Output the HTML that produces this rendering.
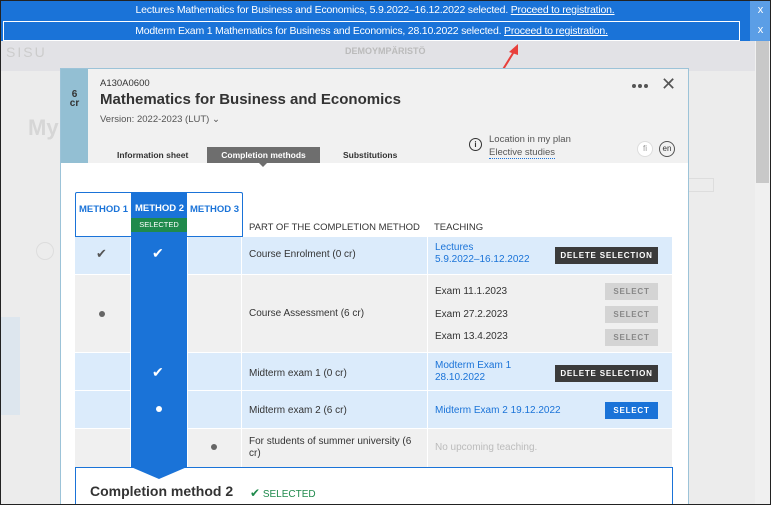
<!DOCTYPE html>
<html><head><meta charset="utf-8"><style>
*{box-sizing:border-box;margin:0;padding:0}
html,body{width:771px;height:505px;overflow:hidden}
body{position:relative;background:#ececec;font-family:"Liberation Sans",sans-serif;font-size:10px;color:#333}
.a{position:absolute}
.ban{left:0;width:750px;height:20px;background:#1a73d8;color:#fff;font-size:10.5px;text-align:center;line-height:20px;letter-spacing:-0.2px;white-space:nowrap}
.ban u{color:#fff}
.x{left:750px;width:21px;height:20px;background:#5b9ee6;color:#fff;text-align:center;line-height:20px;font-size:11px}
.row{left:75px;width:597px}
.btn{position:absolute;width:103px;height:17px;background:#3b3b3b;color:#fff;font-size:8px;font-weight:bold;letter-spacing:0.8px;text-align:center;line-height:17px}
.sel{width:53px;background:#d4d4d4;color:#888}
.blue{color:#1a73d8}
</style></head><body>
<div class="a" style="left:0;top:40px;width:755px;height:31px;background:#e2e2e6"></div>
<div class="a" style="left:6px;top:44px;color:#ccc;font-size:14px;letter-spacing:2px">SISU</div>
<div class="a" style="left:345px;top:46px;color:#bbb;font-size:9px;font-weight:bold">DEMOYMPÄRISTÖ</div>
<div class="a" style="left:28px;top:115px;color:#d6d6d6;font-size:22px;font-weight:bold">My</div>
<div class="a" style="left:36px;top:242px;width:18px;height:18px;border:1px solid #ddd;border-radius:50%"></div>
<div class="a" style="left:0;top:317px;width:20px;height:98px;background:#dde6ee"></div>
<div class="a" style="left:688px;top:178px;width:26px;height:14px;border:1px solid #ddd"></div>
<div class="a" style="left:755px;top:40px;width:15px;height:465px;background:#f0f0f0"></div>
<div class="a" style="left:756px;top:40px;width:13px;height:143px;background:#c8c8c8"></div>
<div class="a ban" style="top:0">Lectures Mathematics for Business and Economics, 5.9.2022–16.12.2022 selected. <u>Proceed to registration.</u></div>
<div class="a x" style="top:0">x</div>
<div class="a ban" style="top:20px;height:21px"></div>
<div class="a ban" style="top:21px;left:3px;width:737px;height:20px;border:1px solid #fff;line-height:18px">Modterm Exam 1 Mathematics for Business and Economics, 28.10.2022 selected. <u>Proceed to registration.</u></div>
<div class="a x" style="top:20px;height:21px">x</div>
<svg class="a" style="left:485px;top:40px" width="40" height="56"><line x1="4" y1="52" x2="30" y2="10" stroke="#e8403c" stroke-width="2"/><polygon points="33,4 24,12 33,15" fill="#e8403c"/></svg>
<div class="a" style="left:60px;top:68px;width:629px;height:437px;background:#fff;border:1px solid #9cc3d8;border-bottom:0"></div>
<div class="a" style="left:61px;top:69px;width:27px;height:94px;background:#93bfd3;text-align:center;font-weight:bold;font-size:10px;line-height:9px;padding-top:21px;color:#333">6<br>cr</div>
<div class="a" style="left:88px;top:69px;width:600px;height:94px;background:#f1f1f1"></div>
<div class="a" style="left:100px;top:78px;font-size:9.5px">A130A0600</div>
<div class="a" style="left:100px;top:91px;font-size:15px;font-weight:bold;color:#333">Mathematics for Business and Economics</div>
<div class="a" style="left:100px;top:114px;font-size:9.5px;color:#555">Version: 2022-2023 (LUT) ⌄</div>
<div class="a" style="left:632px;top:84px;width:4px;height:4px;border-radius:50%;background:#555;box-shadow:6px 0 0 #555,12px 0 0 #555"></div>
<div class="a" style="left:661px;top:74px;font-size:18px;color:#555">✕</div>
<div class="a" style="left:469px;top:138px;width:13px;height:13px;border:1px solid #333;border-radius:50%;font-size:8px;text-align:center;line-height:11px;font-weight:bold">i</div>
<div class="a" style="left:489px;top:133px;font-size:9.5px;color:#555;line-height:13px">Location in my plan<br><span style="border-bottom:1px dotted #1a73d8">Elective studies</span></div>
<div class="a" style="left:637px;top:141px;width:16px;height:16px;border:1px solid #ddd;border-radius:50%;background:#fff;font-size:8px;text-align:center;line-height:14px;color:#999">fi</div>
<div class="a" style="left:659px;top:141px;width:16px;height:16px;border:1px solid #555;border-radius:50%;font-size:8px;text-align:center;line-height:14px">en</div>
<div class="a" style="left:117px;top:150px;font-size:8.5px;font-weight:bold;white-space:nowrap">Information sheet</div>
<div class="a" style="left:207px;top:147px;width:113px;height:16px;background:#6e6e6e;color:#fff;font-size:8.5px;font-weight:bold;text-align:center;line-height:16px;white-space:nowrap">Completion methods</div>
<div class="a" style="left:259px;top:163px;border:4px solid transparent;border-top-color:#6e6e6e"></div>
<div class="a" style="left:343px;top:150px;font-size:8.5px;font-weight:bold">Substitutions</div>
<div class="a" style="left:75px;top:192px;width:168px;height:45px;border:1px solid #1a73d8;border-bottom:0;border-radius:2px 2px 0 0"></div>
<div class="a" style="left:131px;top:192px;width:56px;height:45px;background:#1a73d8"></div>
<div class="a" style="left:131px;top:218px;width:56px;height:14px;background:#1f8a4c;color:#fff;font-size:7.5px;text-align:center;line-height:14px">SELECTED</div>
<div class="a blue" style="left:79px;top:204px;font-size:9.5px;font-weight:bold">METHOD 1</div>
<div class="a" style="left:135px;top:203px;font-size:9.5px;font-weight:bold;color:#fff">METHOD 2</div>
<div class="a blue" style="left:190px;top:204px;font-size:9.5px;font-weight:bold">METHOD 3</div>
<div class="a" style="left:249px;top:222px;font-size:9.5px">PART OF THE COMPLETION METHOD</div>
<div class="a" style="left:434px;top:222px;font-size:9.5px">TEACHING</div>
<div class="a" style="left:75px;top:236px;width:168px;height:1px;background:#1a73d8"></div>
<div class="a row" style="top:237px;height:37px;background:#dbebfb"></div>
<div class="a row" style="top:275px;height:77px;background:#f0f0f0"></div>
<div class="a row" style="top:353px;height:37px;background:#dbebfb"></div>
<div class="a row" style="top:391px;height:37px;background:#dbebfb"></div>
<div class="a row" style="top:429px;height:38px;background:#f0f0f0"></div>
<div class="a" style="left:130px;top:237px;width:1px;height:230px;background:#fff"></div>
<div class="a" style="left:187px;top:237px;width:1px;height:230px;background:#fff"></div>
<div class="a" style="left:241px;top:237px;width:1px;height:230px;background:#fff"></div>
<div class="a" style="left:427px;top:237px;width:1px;height:230px;background:#fff"></div>
<div class="a" style="left:131px;top:237px;width:56px;height:230px;background:#1a73d8"></div>
<div class="a" style="left:96px;top:246px;font-size:13px;color:#555">✔</div>
<div class="a" style="left:152px;top:245px;font-size:14px;color:#fff">✔</div>
<div class="a" style="left:249px;top:249px;font-size:10px">Course Enrolment (0 cr)</div>
<div class="a blue" style="left:435px;top:242px;font-size:10px;line-height:12px">Lectures<br>5.9.2022–16.12.2022</div>
<div class="a btn" style="left:555px;top:247px">DELETE SELECTION</div>
<div class="a" style="left:99px;top:311px;width:6px;height:6px;border-radius:50%;background:#666"></div>
<div class="a" style="left:249px;top:308px;font-size:10px">Course Assessment (6 cr)</div>
<div class="a" style="left:435px;top:286px;font-size:10px">Exam 11.1.2023</div>
<div class="a" style="left:435px;top:309px;font-size:10px">Exam 27.2.2023</div>
<div class="a" style="left:435px;top:331px;font-size:10px">Exam 13.4.2023</div>
<div class="a btn sel" style="left:605px;top:283px">SELECT</div>
<div class="a btn sel" style="left:605px;top:306px">SELECT</div>
<div class="a btn sel" style="left:605px;top:329px">SELECT</div>
<div class="a" style="left:152px;top:364px;font-size:14px;color:#fff">✔</div>
<div class="a" style="left:249px;top:368px;font-size:10px">Midterm exam 1 (0 cr)</div>
<div class="a blue" style="left:435px;top:360px;font-size:10px;line-height:12px">Modterm Exam 1<br>28.10.2022</div>
<div class="a btn" style="left:555px;top:365px">DELETE SELECTION</div>
<div class="a" style="left:156px;top:406px;width:6px;height:6px;border-radius:50%;background:#fff"></div>
<div class="a" style="left:249px;top:405px;font-size:10px">Midterm exam 2 (6 cr)</div>
<div class="a blue" style="left:435px;top:405px;font-size:10px">Midterm Exam 2 19.12.2022</div>
<div class="a btn" style="left:605px;top:402px;width:53px;background:#1a73d8">SELECT</div>
<div class="a" style="left:211px;top:444px;width:6px;height:6px;border-radius:50%;background:#666"></div>
<div class="a" style="left:249px;top:436px;font-size:10px;line-height:12px;width:175px">For students of summer university (6<br>cr)</div>
<div class="a" style="left:435px;top:442px;font-size:10px;color:#bbb">No upcoming teaching.</div>
<div class="a" style="left:75px;top:467px;width:598px;height:40px;border:1px solid #1a73d8;border-bottom:0"></div>
<div class="a" style="left:131px;top:467px;border-left:28px solid transparent;border-right:28px solid transparent;border-top:12px solid #1a73d8"></div>
<div class="a" style="left:90px;top:483px;font-size:14px;font-weight:bold;color:#333">Completion method 2</div>
<div class="a" style="left:250px;top:486px;font-size:10px;color:#1f8a4c"><span style="font-size:12px">✔</span> SELECTED</div>
<div class="a" style="left:0;top:0;width:771px;height:505px;border:1px solid #222;pointer-events:none"></div>
</body></html>
